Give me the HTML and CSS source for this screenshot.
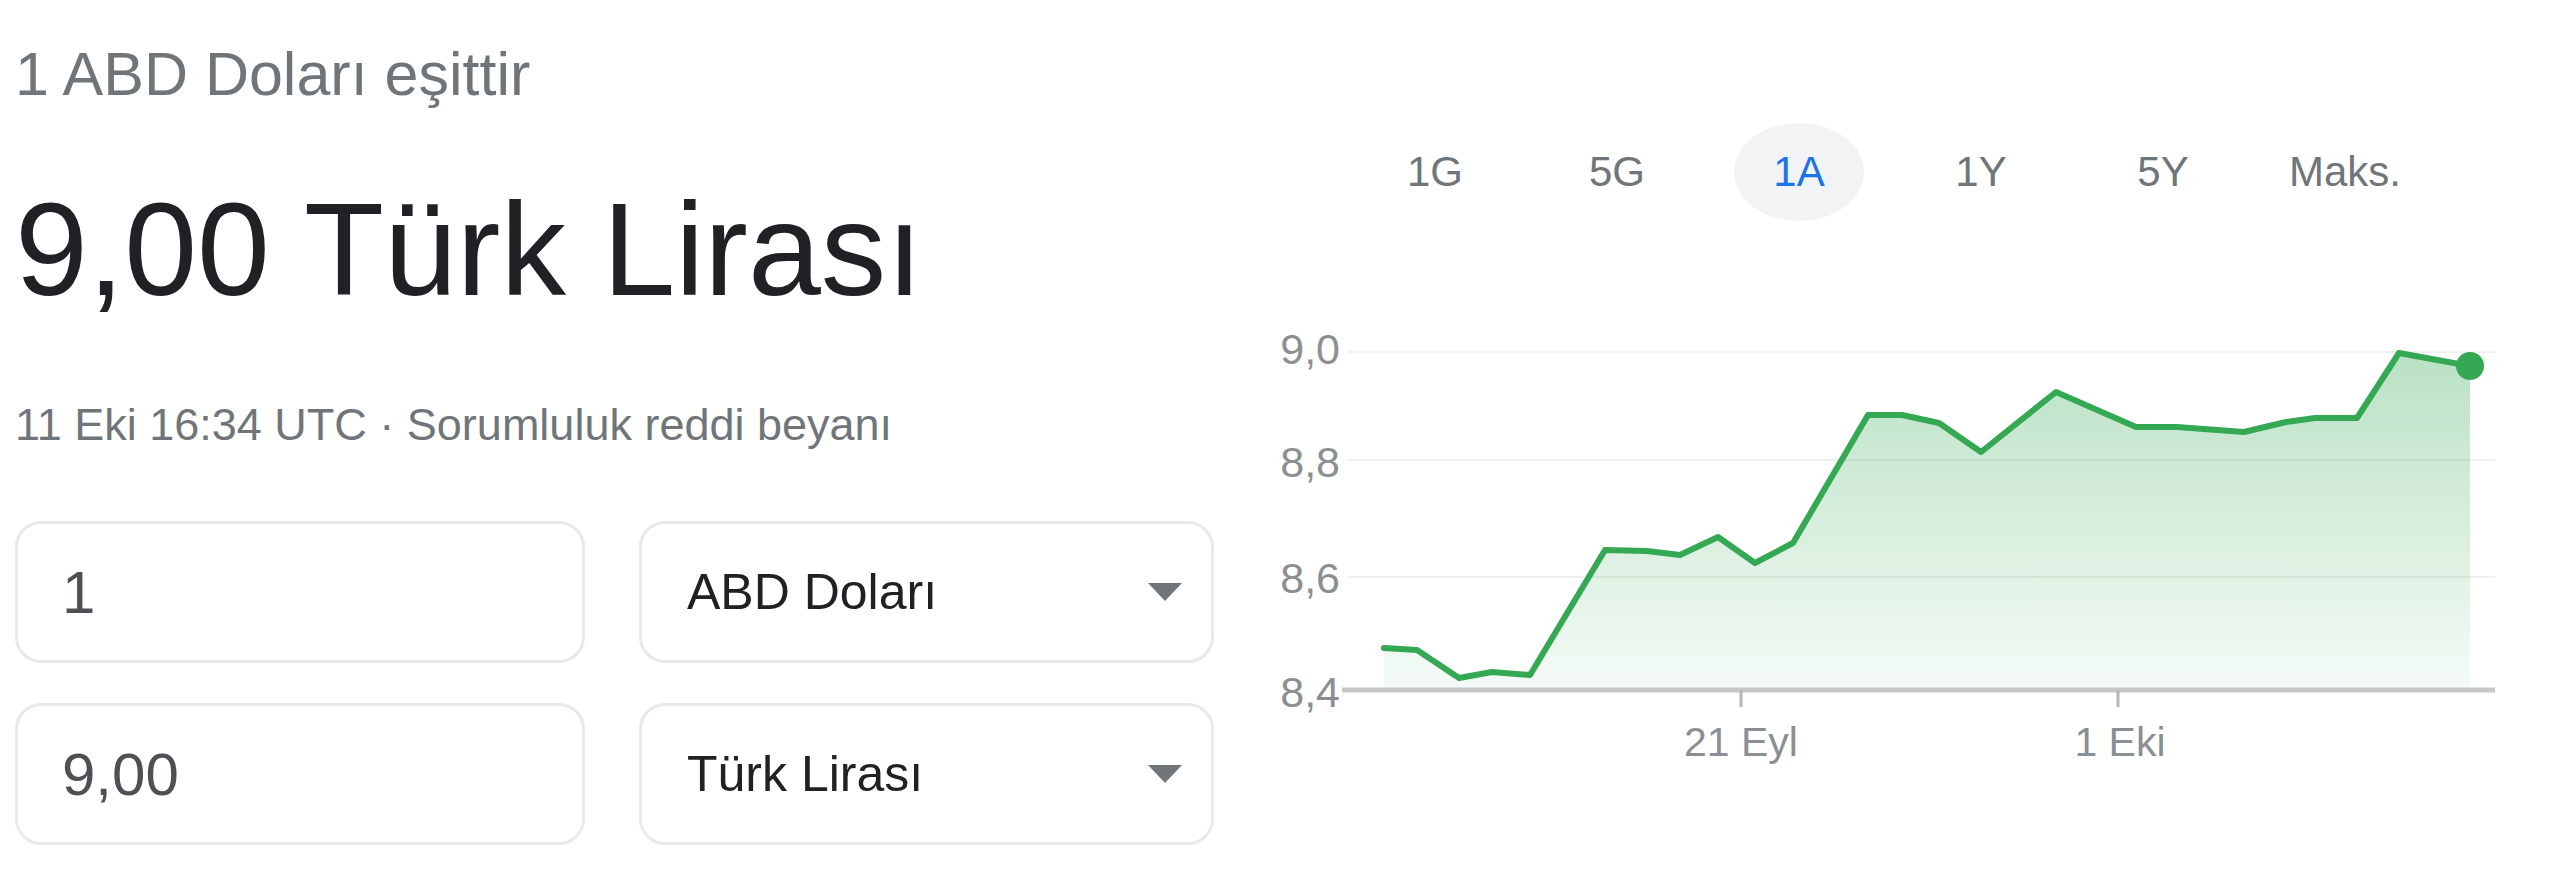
FILE: index.html
```html
<!DOCTYPE html>
<html lang="tr">
<head>
    <meta charset="UTF-8">
    <meta name="viewport" content="width=device-width, initial-scale=1.0">
    <title>Döviz çevirici</title>
    <link rel="stylesheet" href="styles.css">
</head>
<body>
    <div class="card">
        <div class="left">
            <div class="eq">1 ABD Doları eşittir</div>
            <div class="result">9,00 Türk Lirası</div>
            <div class="date">11 Eki 16:34 UTC · <span class="link">Sorumluluk reddi beyanı</span></div>

            <div class="converter">
                <div class="box amount">1</div>
                <div class="box select">
                    <span>ABD Doları</span>
                    <span class="arrow"></span>
                </div>
                <div class="box amount">9,00</div>
                <div class="box select">
                    <span>Türk Lirası</span>
                    <span class="arrow"></span>
                </div>
            </div>
        </div>

        <div class="right">
            <div class="tabs">
                <div class="tab">1G</div>
                <div class="tab">5G</div>
                <div class="tab active">1A</div>
                <div class="tab">1Y</div>
                <div class="tab">5Y</div>
                <div class="tab">Maks.</div>
            </div>

            <svg class="chart" width="1310" height="500" viewBox="1250 300 1310 500">
                <defs>
                    <linearGradient id="area" x1="0" y1="353" x2="0" y2="690" gradientUnits="userSpaceOnUse">
                        <stop offset="0" stop-color="#34a853" stop-opacity="0.34"/>
                        <stop offset="1" stop-color="#34a853" stop-opacity="0.05"/>
                    </linearGradient>
                </defs>

                <line class="grid" x1="1348" y1="352" x2="2495" y2="352"/>
                <line class="grid" x1="1348" y1="460" x2="2495" y2="460"/>
                <line class="grid" x1="1348" y1="577" x2="2495" y2="577"/>

                <polygon fill="url(#area)" points="1384,648 1417,650 1459,678 1492,672 1530,675 1605,550 1647,551 1680,555 1718,537 1755,563 1793,543 1868,415 1902,415 1939,423 1981,452 2056,392 2136,427 2177,427 2244,432 2286,422 2315,418 2357,418 2399,353 2470,366 2470,690 1384,690"/>
                <polyline class="line" points="1384,648 1417,650 1459,678 1492,672 1530,675 1605,550 1647,551 1680,555 1718,537 1755,563 1793,543 1868,415 1902,415 1939,423 1981,452 2056,392 2136,427 2177,427 2244,432 2286,422 2315,418 2357,418 2399,353 2470,366"/>
                <circle class="dot" cx="2470" cy="366" r="14"/>

                <line class="axis" x1="1342" y1="690" x2="2495" y2="690"/>
                <line class="tick" x1="1741" y1="690" x2="1741" y2="707"/>
                <line class="tick" x1="2118" y1="690" x2="2118" y2="707"/>

                <text class="ylabel" x="1340" y="364">9,0</text>
                <text class="ylabel" x="1340" y="477">8,8</text>
                <text class="ylabel" x="1340" y="593">8,6</text>
                <text class="ylabel" x="1340" y="707">8,4</text>

                <text class="xlabel" x="1741" y="756">21 Eyl</text>
                <text class="xlabel" x="2120" y="756">1 Eki</text>
            </svg>
        </div>
    </div>
</body>
</html>
```

FILE: styles.css
```css
body {
    margin: 0;
    background: #fff;
    font-family: "Liberation Sans", Arial, sans-serif;
}

.card {
    display: flex;
    width: 2560px;
    height: 879px;
}

.left {
    width: 1235px;
    padding-left: 15px;
}

.eq {
    margin-top: 45px;
    font-size: 61px;
    line-height: 59px;
    color: #70757a;
}

.result {
    margin-top: 80px;
    font-size: 131px;
    line-height: 131px;
    color: #202124;
}

.date {
    margin-top: 87px;
    font-size: 45px;
    line-height: 45px;
    color: #70757a;
}

.converter {
    display: grid;
    grid-template-columns: 570px 575px;
    grid-auto-rows: 142px;
    column-gap: 54px;
    row-gap: 40px;
    margin-top: 74px;
}

.box {
    border: 3px solid #e8e9eb;
    border-radius: 26px;
    display: flex;
    align-items: center;
    box-sizing: border-box;
}

.amount {
    padding-left: 44px;
    font-size: 60px;
    color: #4d5156;
}

.select {
    justify-content: space-between;
    padding: 0 29px 0 45px;
    font-size: 50px;
    color: #202124;
}

.arrow {
    width: 0;
    height: 0;
    border-left: 17px solid transparent;
    border-right: 17px solid transparent;
    border-top: 18px solid #70757a;
}

.right {
    width: 1310px;
    display: flex;
    flex-direction: column;
}

.tabs {
    display: flex;
    gap: 52px;
    margin-top: 123px;
    padding-left: 120px;
}

.tab {
    width: 130px;
    height: 98px;
    line-height: 98px;
    text-align: center;
    font-size: 42px;
    color: #70757a;
    border-radius: 50%;
}

.tab.active {
    background: #f1f3f4;
    color: #1a73e8;
}

.chart {
    display: block;
    margin-top: 79px;
}

.grid {
    stroke: #efefef;
    stroke-width: 2;
}

.axis {
    stroke: #c6c7c8;
    stroke-width: 5;
}

.tick {
    stroke: #b5b7b9;
    stroke-width: 3;
}

.line {
    fill: none;
    stroke: #34a853;
    stroke-width: 6;
    stroke-linejoin: round;
    stroke-linecap: round;
}

.dot {
    fill: #34a853;
}

.ylabel {
    font-size: 43px;
    fill: #8a8f94;
    text-anchor: end;
}

.xlabel {
    font-size: 41px;
    fill: #8a8f94;
    text-anchor: middle;
}
```
